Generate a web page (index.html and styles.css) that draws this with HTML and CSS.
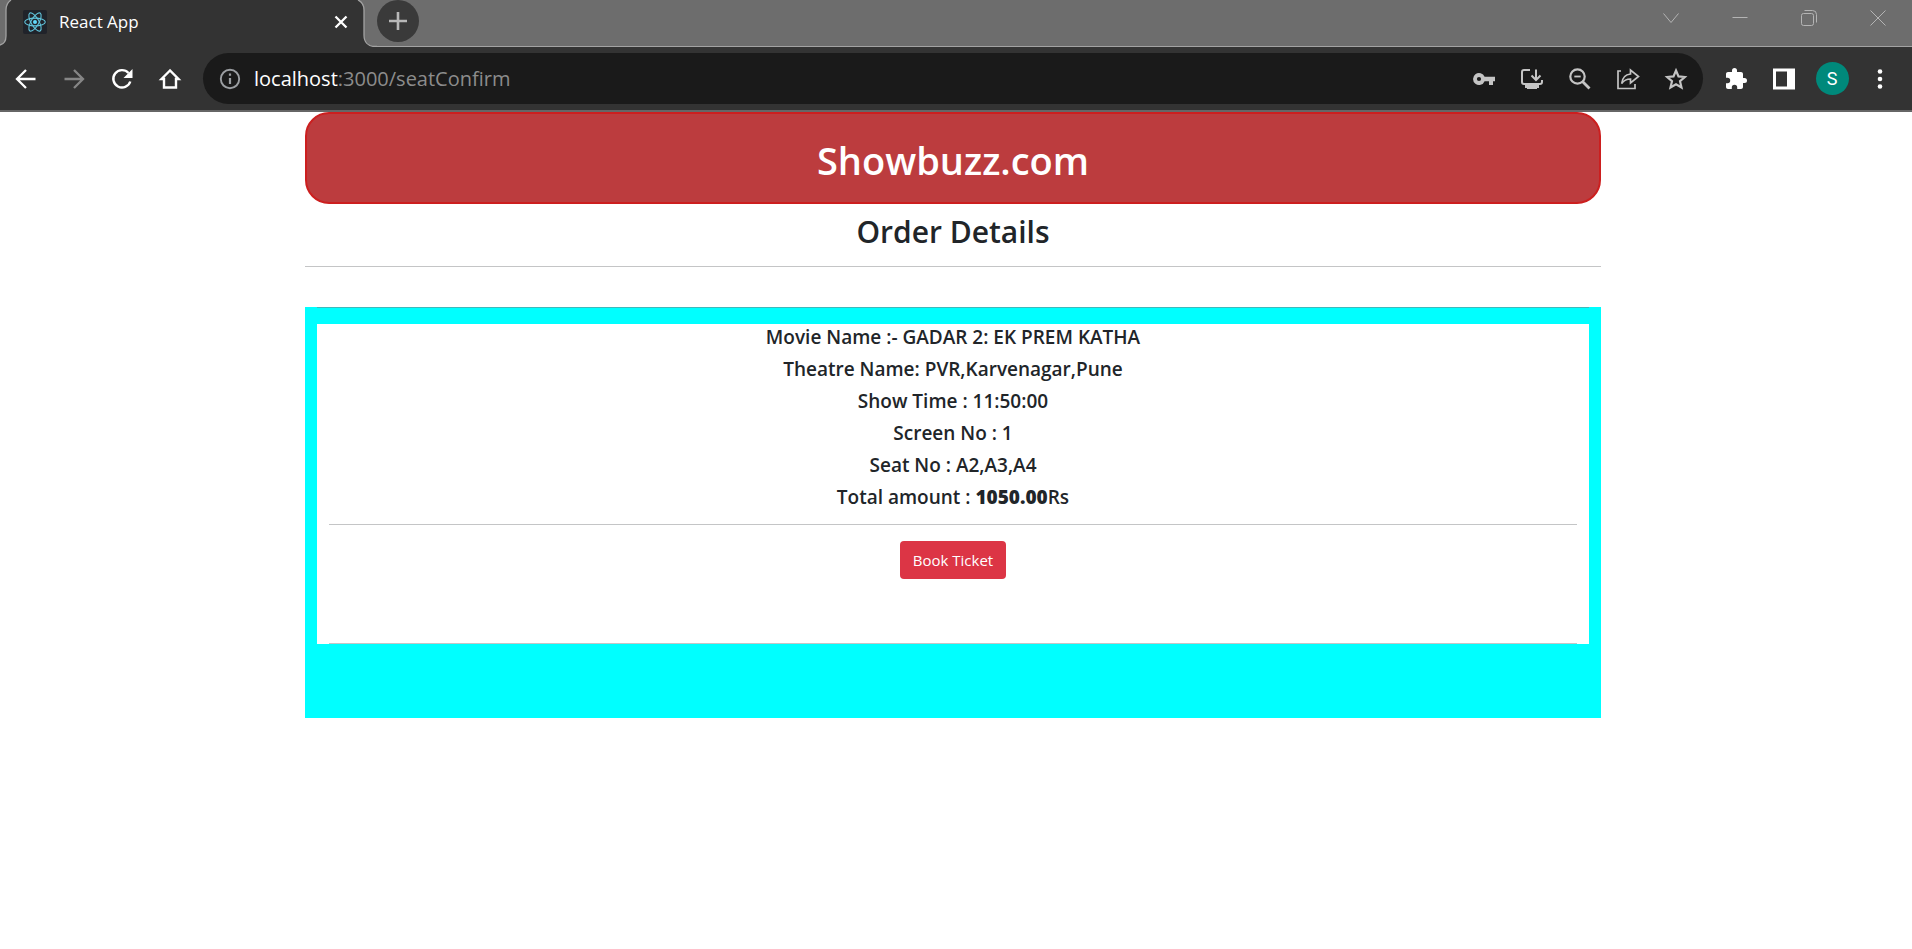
FILE: index.html
```html
<!DOCTYPE html>
<html lang="en">
<head>
<meta charset="utf-8">
<title>React App</title>
<link rel="stylesheet" href="styles.css">
</head>
<body>
<header class="browser">
  <div class="tabstrip">
    <svg class="tab-edge" width="16" height="47" viewBox="0 0 16 47" aria-hidden="true">
      <path d="M0 47V45C4 44 6 41 6 36V10C6 5 8 2 11 0H16V47Z" fill="#333"/>
      <path d="M0 45C4 44 6 41 6 36V10C6 5 8 2 11 0" fill="none" stroke="#a3a3a3" stroke-width="1.3"/>
    </svg>
    <div class="tab">
      <svg class="favicon" viewBox="0 0 24 24" aria-hidden="true">
        <rect width="24" height="24" rx="2" fill="#20232a"/>
        <g fill="none" stroke="#61c5dd" stroke-width="1.1">
          <ellipse cx="12" cy="12" rx="10.3" ry="3.9"/>
          <ellipse cx="12" cy="12" rx="10.3" ry="3.9" transform="rotate(60 12 12)"/>
          <ellipse cx="12" cy="12" rx="10.3" ry="3.9" transform="rotate(120 12 12)"/>
        </g>
        <circle cx="12" cy="12" r="2" fill="#61dafb"/>
      </svg>
      <span class="tab-title">React App</span>
      <button class="icon-btn tab-close" aria-label="Close tab">
        <svg width="14" height="14" viewBox="0 0 14 14"><path d="M1.5 1.5l11 11M12.5 1.5l-11 11" stroke="#fff" stroke-width="2.3"/></svg>
      </button>
    </div>
    <svg class="tab-edge" width="24" height="47" viewBox="2 0 24 47" aria-hidden="true">
      <path d="M0 0H7C11 2 13 5 13 10V35C13 42 17 46.500 24 46.500H26V47H0Z" fill="#333"/>
      <path d="M7 0C11 2 13 5 13 10V35C13 42 17 46.500 24 46.500H26" fill="none" stroke="#a3a3a3" stroke-width="1.300"/>
    </svg>
    <div class="strip-rest">
      <button class="new-tab" aria-label="New tab">
        <svg width="20" height="20" viewBox="0 0 20 20"><path d="M10 1v18M1 10h18" stroke="#b8b8b8" stroke-width="2.600"/></svg>
      </button>
      <div class="window-controls">
        <button class="icon-btn" aria-label="Search tabs"><svg width="16" height="16" viewBox="0 0 16 16"><path d="M.5 3.500l7.500 9 7.500-9"/></svg></button>
        <button class="icon-btn" aria-label="Minimize"><svg width="16" height="16" viewBox="0 0 16 16"><path d="M.5 7.500h15"/></svg></button>
        <button class="icon-btn" aria-label="Restore"><svg width="16" height="16" viewBox="0 0 16 16"><rect x=".5" y="3.500" width="12" height="12" rx="2"/><path d="M3.500.5h8a4 4 0 0 1 4 4v8"/></svg></button>
        <button class="icon-btn" aria-label="Close"><svg width="16" height="16" viewBox="0 0 16 16"><path d="M.5.5l15 15M15.500.5l-15 15"/></svg></button>
      </div>
    </div>
  </div>

  <nav class="toolbar" aria-label="Browser toolbar">
    <div class="icon-group">
      <button class="icon-btn" aria-label="Back"><svg width="24" height="24" viewBox="0 0 24 24"><path d="M21.500 12H4M12 3l-9 9 9 9" fill="none" stroke="#fff" stroke-width="2.300"/></svg></button>
      <button class="icon-btn" aria-label="Forward"><svg width="24" height="24" viewBox="0 0 24 24"><path d="M2.500 12H20M12 3l9 9-9 9" fill="none" stroke="#868686" stroke-width="2.300"/></svg></button>
      <button class="icon-btn" aria-label="Reload"><svg width="24" height="24" viewBox="0 0 24 24"><path d="M20.300 14.500A8.700 8.700 0 1 1 18.500 6" fill="none" stroke="#fff" stroke-width="2.400"/><path d="M22.500 2v9h-9z" fill="#fff"/></svg></button>
      <button class="icon-btn" aria-label="Home"><svg width="24" height="24" viewBox="0 0 24 24"><path d="M12 3.500L3.500 12H6v8.500h12V12h2.500z" fill="none" stroke="#fff" stroke-width="2.400"/></svg></button>
    </div>
    <div class="omnibox">
      <svg width="22" height="22" viewBox="0 0 22 22" aria-hidden="true"><circle cx="11" cy="11" r="9.200" fill="none" stroke="#9b9ea2" stroke-width="1.900"/><path d="M11 10v6M11 5.500v2.300" stroke="#9b9ea2" stroke-width="2.200"/></svg>
      <span class="url"><b>localhost</b>:3000/seatConfirm</span>
      <div class="icon-group">
        <button class="icon-btn" aria-label="Passwords"><svg width="24" height="24" viewBox="0 0 24 24"><path fill="#c4c4c4" fill-rule="evenodd" d="M12.600 9.800A6 6 0 1 0 12.600 14.200H17V18H21V14.200H23V9.800ZM7 14.100A2.100 2.100 0 1 1 7 9.900 2.100 2.100 0 0 1 7 14.100Z"/></svg></button>
        <button class="icon-btn" aria-label="Install app"><svg width="24" height="24" viewBox="0 0 24 24"><path d="M10 3H4Q2 3 2 5V15Q2 17 4 17H20Q22 17 22 15V13M16 2.500V12M11.500 8.500L16 13l4.500-4.500" fill="none" stroke="#c4c4c4" stroke-width="2"/><path d="M5 18h14v3h-2v1H7v-1H5z" fill="#c4c4c4"/></svg></button>
        <button class="icon-btn" aria-label="Zoom"><svg width="24" height="24" viewBox="0 0 24 24"><g fill="none" stroke="#c4c4c4"><circle cx="9.500" cy="9.500" r="7.200" stroke-width="2.200"/><path d="M14.500 14.500l7 7" stroke-width="2.800"/><path d="M6.300 9.500h6.400" stroke-width="1.800"/></g></svg></button>
        <button class="icon-btn" aria-label="Share"><svg width="24" height="24" viewBox="0 0 24 24"><g fill="none" stroke="#c4c4c4" stroke-width="1.700"><path d="M5 4H2V21.500H19V17"/><path d="M14.500 7V3L22.500 9.500L14.500 16V12C10.500 12 8 13.200 5.700 16.500C6.300 11 9.500 7.500 14.500 7Z"/></g></svg></button>
        <button class="icon-btn" aria-label="Bookmark"><svg width="24" height="24" viewBox="0 0 24 24"><path fill="none" stroke="#c4c4c4" stroke-width="2.200" d="M12 3.500l2.500 5.900 6.300.6-4.800 4.200 1.500 6.300L12 17.200l-5.500 3.300 1.500-6.300L3.200 10l6.300-.6z"/></svg></button>
      </div>
    </div>
    <div class="icon-group">
      <button class="icon-btn" aria-label="Extensions"><svg width="24" height="24" viewBox="0 0 24 24"><path fill="#fff" d="M20.500 11H19V7c0-1.100-.9-2-2-2h-4V3.500a2.500 2.500 0 0 0-5 0V5H4c-1.100 0-2 .9-2 2v3.800h1.500a2.700 2.700 0 0 1 0 5.400H2V20c0 1.100.9 2 2 2h3.800v-1.500a2.700 2.700 0 0 1 5.400 0V22H17c1.100 0 2-.9 2-2v-4h1.500a2.500 2.500 0 0 0 0-5z"/></svg></button>
      <button class="icon-btn" aria-label="Side panel"><svg width="24" height="24" viewBox="0 0 24 24"><path fill="#fff" fill-rule="evenodd" d="M1 1.500H23V22.500H1ZM4 4.500V19.500H15V4.500Z"/></svg></button>
      <button class="icon-btn" aria-label="Profile"><span class="avatar">S</span></button>
      <button class="icon-btn" aria-label="Menu"><svg width="24" height="24" viewBox="0 0 24 24" fill="#fff"><circle cx="12" cy="4.500" r="2.300"/><circle cx="12" cy="12" r="2.300"/><circle cx="12" cy="19.500" r="2.300"/></svg></button>
    </div>
  </nav>
</header>

<div class="page">
  <main class="container">
    <h1 class="brand">Showbuzz.com</h1>
    <h2 class="heading">Order Details</h2>
    <hr class="rule">
    <section class="order">
      <hr class="order-rule">
      <div class="ticket">
        <h5>Movie Name :- GADAR 2: EK PREM KATHA</h5>
        <h5>Theatre Name: PVR,Karvenagar,Pune</h5>
        <h5>Show Time : 11:50:00</h5>
        <h5>Screen No : 1</h5>
        <h5>Seat No : A2,A3,A4</h5>
        <h5>Total amount : <b>1050.00</b>Rs</h5>
        <hr class="rule ticket-rule">
        <button class="btn-danger">Book Ticket</button>
        <hr class="rule ticket-end">
      </div>
    </section>
  </main>
</div>
</body>
</html>
```
FILE: styles.css
```css
* {
  box-sizing: border-box;
}

body {
  margin: 0;
  background: #fff;
  color: #212529;
  font-family: "Open Sans", "Noto Sans", sans-serif;
  font-size: 16px;
}

button {
  font-family: inherit;
  cursor: pointer;
}

svg {
  display: block;
  flex: none;
}

/* Browser frame */
.browser {
  background: #333;
  border-bottom: 2px solid #666;
}

.tabstrip {
  display: flex;
  height: 47px;
  background: #6d6d6d;
}

.tab {
  display: flex;
  align-items: center;
  width: 337px;
  padding: 0 0 3px 7px;
  background: #333;
}

.favicon {
  width: 24px;
  height: 24px;
}

.tab-title {
  flex: 1;
  padding-left: 12px;
  color: #fff;
  font-size: 17px;
  line-height: 24px;
}

.icon-btn {
  display: flex;
  align-items: center;
  justify-content: center;
  flex: none;
  width: 24px;
  height: 24px;
  padding: 0;
  border: 0;
  background: none;
}

.strip-rest {
  display: flex;
  flex: 1;
  align-items: flex-start;
  justify-content: space-between;
  border-bottom: 1px solid #a3a3a3;
}

.new-tab {
  display: flex;
  align-items: center;
  justify-content: center;
  width: 42px;
  height: 42px;
  padding: 0;
  border: 0;
  border-radius: 50%;
  background: #3a3a3a;
}

.window-controls {
  display: flex;
  gap: 45px;
  padding: 6px 22px 0 0;
}

.window-controls svg {
  fill: none;
  stroke: #b4b4b4;
  stroke-width: 1;
}

.toolbar {
  display: flex;
  align-items: center;
  gap: 21px;
  height: 63px;
  padding: 0 20px 0 14px;
}

.icon-group {
  display: flex;
  gap: 24px;
}

.omnibox {
  display: flex;
  flex: 1;
  align-items: center;
  height: 51px;
  padding: 0 15px 0 16px;
  border-radius: 26px;
  background: #1a1a1a;
}

.url {
  flex: 1;
  padding-left: 13px;
  color: #8c8c8c;
  font-size: 20px;
  line-height: 28px;
}

.url b {
  color: #fff;
  font-weight: 400;
}

.avatar {
  display: flex;
  align-items: center;
  justify-content: center;
  flex: none;
  width: 33px;
  height: 33px;
  border-radius: 50%;
  background: #00897b;
  color: #fff;
  font-family: Roboto, sans-serif;
  font-size: 18px;
}

/* Page */
.page {
  padding-right: 6px;
}

.container {
  max-width: 1320px;
  margin: 0 auto;
  padding: 0 12px;
  text-align: center;
}

.brand {
  margin: 0 0 8px;
  padding: 22px 20px 18px;
  border: 2px solid #cc1f1f;
  border-radius: 24px;
  background: #bc3c3e;
  color: #fff;
  font-size: 38px;
  font-weight: 600;
  line-height: 48px;
}

.heading {
  margin: 0;
  padding-top: 2px;
  font-size: 30px;
  font-weight: 600;
  line-height: 36px;
}

.rule {
  height: 1px;
  margin: 16px 0;
  border: 0;
  background: #c4c5c6;
}

.order {
  display: flow-root;
  margin-top: 40px;
  padding: 0 12px 74px;
  background: #0ff;
}

.order-rule {
  height: 1px;
  margin: 0 0 16px;
  border: 0;
  background: #3fb9bb;
}

.ticket {
  padding: 0 12px;
  background: #fff;
}

.ticket h5 {
  margin: 0 0 6px;
  font-size: 19px;
  font-weight: 600;
  line-height: 26px;
}

.ticket-rule {
  margin-top: 14px;
}

.btn-danger {
  height: 38px;
  padding: 0 13px;
  border: 0;
  border-radius: 4px;
  background: #dc3545;
  color: #fff;
  font-size: 15px;
  line-height: 24px;
  vertical-align: top;
}

.ticket-end {
  margin: 64px 0 0;
}
```
